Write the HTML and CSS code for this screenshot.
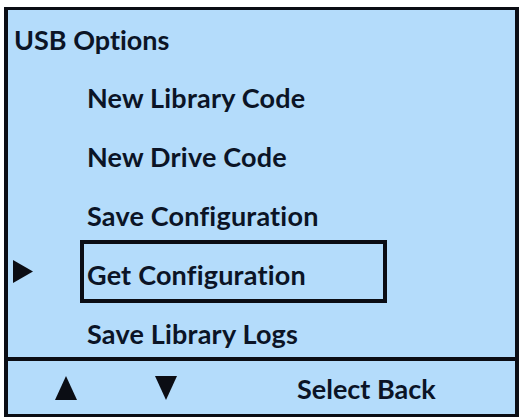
FILE: index.html
```html
<!DOCTYPE html>
<html>
<head>
<meta charset="utf-8">
<link rel="stylesheet" href="styles.css">
</head>
<body>
<div class="frame">
  <div class="main">
    <div class="title">USB Options</div>
    <div class="row"><span class="mark"></span><span class="box">New Library Code</span></div>
    <div class="row"><span class="mark"></span><span class="box">New Drive Code</span></div>
    <div class="row"><span class="mark"></span><span class="box">Save Configuration</span></div>
    <div class="row selected"><span class="mark"><svg class="ptr" width="20" height="23" viewBox="0 0 20 23"><polygon points="0,0 20,11.5 0,23" fill="#0b0d14"/></svg></span><span class="box">Get Configuration</span></div>
    <div class="row"><span class="mark"></span><span class="box">Save Library Logs</span></div>
  </div>
  <div class="footer">
    <svg class="tri up" width="22" height="24" viewBox="0 0 22 24"><polygon points="11,0 22,24 0,24" fill="#0b0d14"/></svg>
    <svg class="tri down" width="22" height="24" viewBox="0 0 22 24"><polygon points="0,0 22,0 11,24" fill="#0b0d14"/></svg>
    <span class="keys">Select Back</span>
  </div>
</div>
</body>
</html>
```

FILE: styles.css
```css
html, body {
  margin: 0;
  padding: 0;
  background: #ffffff;
}
body {
  width: 520px;
  height: 417px;
  overflow: hidden;
  font-family: "Lato", "Open Sans", sans-serif;
  font-weight: 700;
  color: #0b1426;
  font-variant-ligatures: none;
  font-feature-settings: "liga" 0, "clig" 0, "dlig" 0;
}
.frame {
  margin: 7px 0 0 4px;
  width: 507px;
  height: 404px;
  border-style: solid;
  border-color: #0b0d14;
  border-width: 3px 4px 3px 4px;
  background: #b4dcfb;
  display: flex;
  flex-direction: column;
}
.main {
  height: 347px;
  display: flex;
  flex-direction: column;
}
.title {
  height: 50px;
  padding: 3px 0 0 6px;
  font-size: 27px;
  line-height: 53px;
  overflow: visible;
}
.row {
  display: flex;
  align-items: center;
  margin-top: -4px;
}
.title + .row {
  margin-top: 0;
}
.mark {
  width: 72px;
  display: flex;
  align-items: center;
}
.ptr {
  margin-left: 5px;
}
.box {
  width: 296px;
  height: 55px;
  line-height: 61px;
  padding-left: 3px;
  border: 4px solid transparent;
  font-size: 27px;
  letter-spacing: 0.2px;
  white-space: nowrap;
  overflow: hidden;
}
.selected .box {
  border-color: #0b0d14;
}
.footer {
  flex: 1;
  border-top: 4px solid #0b0d14;
  display: flex;
  align-items: center;
  padding-left: 47px;
}
.tri.down {
  margin-left: 78px;
}
.keys {
  margin-left: 120px;
  padding-top: 2px;
  font-size: 27px;
}
```
